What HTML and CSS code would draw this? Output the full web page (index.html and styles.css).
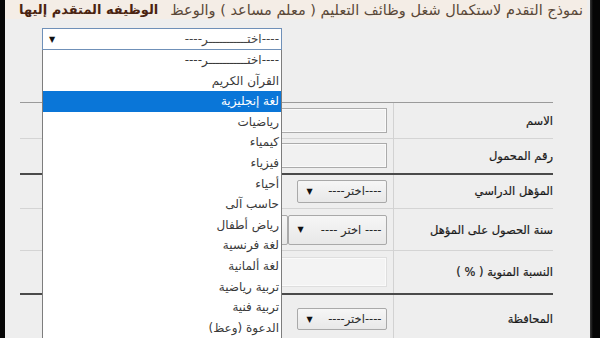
FILE: index.html
```html
<!DOCTYPE html>
<html lang="ar">
<head>
<meta charset="utf-8">
<title>نموذج التقدم</title>
<link rel="stylesheet" href="styles.css">
</head>
<body>
<div class="frame">
  <div class="bar-left"></div>
  <main class="page">
    <header class="title" dir="rtl">
      <span class="title-main">نموذج التقدم لاستكمال شغل وظائف التعليم ( معلم مساعد ) والوعظ</span>
      <span class="title-job">الوظيفه المتقدم إليها</span>
    </header>
    <div class="job-row">
      <div class="job-select">
        <span class="arrow">▼</span>
        <span class="val" dir="rtl">----اختـــــــــــر----</span>
      </div>
    </div>
    <div class="form-clip">
      <table class="form">
        <tr class="r1">
          <td class="c-left"></td>
          <td class="c-input"><div class="field"></div></td>
          <td class="c-label" dir="rtl">الاسم</td>
        </tr>
        <tr class="r2">
          <td class="c-left"></td>
          <td class="c-input"><div class="field"></div></td>
          <td class="c-label" dir="rtl">رقم المحمول</td>
        </tr>
        <tr class="r3 group">
          <td class="c-left"></td>
          <td class="c-input"><div class="sel sel-a"><span class="arrow">▼</span><span dir="rtl">----اختر----</span></div></td>
          <td class="c-label" dir="rtl">المؤهل الدراسي</td>
        </tr>
        <tr class="r4">
          <td class="c-left"></td>
          <td class="c-input"><div class="pair"><div class="sel sel-side"></div><div class="sel sel-b"><span class="arrow">▼</span><span dir="rtl">---- اختر ----</span></div></div></td>
          <td class="c-label" dir="rtl">سنة الحصول على المؤهل</td>
        </tr>
        <tr class="r5">
          <td class="c-left"></td>
          <td class="c-input"><div class="field field-pct"></div></td>
          <td class="c-label" dir="rtl">النسبة المنوية ( % )</td>
        </tr>
        <tr class="r6 group">
          <td class="c-left"></td>
          <td class="c-input"><div class="sel sel-a sel-c"><span class="arrow">▼</span><span dir="rtl">----اختر----</span></div></td>
          <td class="c-label" dir="rtl">المحافظة</td>
        </tr>
      </table>
    </div>
    <ul class="dropdown" dir="rtl">
      <li>----اختـــــــــــر----</li>
      <li>القرآن الكريم</li>
      <li class="hl">لغة إنجليزية</li>
      <li>رياضيات</li>
      <li>كيمياء</li>
      <li>فيزياء</li>
      <li>أحياء</li>
      <li>حاسب آلى</li>
      <li>رياض أطفال</li>
      <li>لغة فرنسية</li>
      <li>لغة ألمانية</li>
      <li>تربية رياضية</li>
      <li>تربية فنية</li>
      <li>الدعوة (وعظ)</li>
    </ul>
  </main>
  <div class="bar-right"></div>
</div>
</body>
</html>
```

FILE: styles.css
```css
* { box-sizing: border-box; margin: 0; padding: 0; }
html, body { width: 600px; height: 338px; overflow: hidden; }
body { background: #000; font-family: "DejaVu Sans", sans-serif; }

.frame { display: flex; height: 338px; }
.bar-left { width: 5px; flex: none; background: #060606; }
.bar-right { flex: 1; background: linear-gradient(to right, #3a3a3a, #050505 3px); }
.page { width: 585px; flex: none; background: #eeeeee; position: relative; overflow: hidden; }

.title {
  height: 19px;
  margin-right: 3px;
  background: #f4ede6;
  display: flex;
  align-items: center;
  gap: 12px;
  padding-right: 4px;
  white-space: nowrap;
}
.title-main { font-size: 14.5px; color: #5a4838; }
.title-job { font-size: 13px; font-weight: bold; color: #4b2410; }

.job-row { padding: 9px 0 0 37px; }
.job-select {
  width: 240px;
  height: 22px;
  border: 1px solid #6f90b8;
  background: #fff;
  display: flex;
  align-items: center;
  justify-content: space-between;
  padding: 0 2px 0 6px;
  font-size: 12px;
  color: #444;
}
.arrow { font-size: 8px; color: #111; }

.form-clip { margin: 52px 0 0 15px; width: 533px; height: 240px; overflow: hidden; }
.form { width: 533px; border-collapse: collapse; table-layout: fixed; }
.form td { padding: 0; vertical-align: middle; border-top: 1px solid #d4d4d4; }
.form tr.r1 td { border-top: 1px solid #9a9a9a; }
.form tr.group td { border-top: 2px solid #4a4a4a; }
.c-left { width: 180px; }
.c-input { width: 193px; text-align: right; padding-right: 6px !important; }
.c-label {
  width: 160px;
  border-left: 1px solid #d2d2d2;
  text-align: right;
  font-size: 11.5px;
  color: #1a1a1a;
  white-space: nowrap;
  -webkit-text-stroke: 0.2px #1a1a1a;
}
.r1 { height: 36px; }
.r2 { height: 35px; }
.r3 { height: 35px; }
.r4 { height: 42px; }
.r5 { height: 43px; }
.r6 { height: 50px; }

.field {
  margin-left: auto;
  width: 180px;
  height: 25px;
  border: 1px solid #ababab;
  box-shadow: inset 0 0 0 1px #fafafa;
  background: #f1f1f1;
}
.field-pct { height: 30px; border-color: #dedede; background: #f3f3f3; }

.sel {
  display: flex;
  align-items: center;
  justify-content: space-between;
  border: 1px solid #a9a9a9;
  border-radius: 2px;
  background: linear-gradient(#f6f6f6, #e8e8e8);
  font-size: 11.5px;
  color: #2a2a2a;
  padding: 0 4px 0 9px;
}
.sel-a { margin-left: auto; width: 90px; height: 23px; }
.sel-c { height: 22px; }
.pair { display: flex; justify-content: flex-end; }
.sel-side { width: 40px; height: 30px; }
.sel-b { width: 99px; height: 30px; }

.dropdown {
  position: absolute;
  top: 50px;
  left: 37px;
  width: 240px;
  height: 300px;
  list-style: none;
  background: #fff;
  border: 1px solid #7d7d7d;
  border-top: none;
  font-size: 12px;
  color: #3a3a3a;
}
.dropdown li {
  height: 20.6px;
  line-height: 20.6px;
  padding-right: 2px;
  white-space: nowrap;
}
.dropdown li.hl { background: #0a76d8; color: #fff; }
```
